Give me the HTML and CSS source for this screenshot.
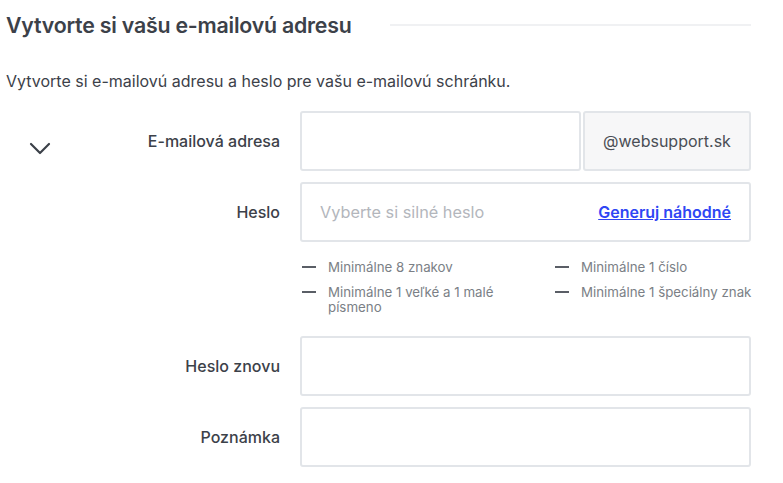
FILE: index.html
```html
<!DOCTYPE html>
<html lang="sk">
<head>
    <meta charset="UTF-8">
    <meta name="viewport" content="width=device-width, initial-scale=1.0">
    <title>Vytvorte si vašu e-mailovú adresu</title>
    <link rel="stylesheet" href="styles.css">
</head>
<body>
    <div class="page">
        <div class="section-head">
            <h2>Vytvorte si vašu e-mailovú adresu</h2>
            <div class="rule"></div>
        </div>
        <p class="intro">Vytvorte si e-mailovú adresu a heslo pre vašu e-mailovú schránku.</p>

        <form class="mail-form">
            <!-- E-mail -->
            <div class="label-cell">
                <svg class="chevron" width="22" height="13" viewBox="0 0 22 13">
                    <path d="M2 2 L11 11 L20 2" fill="none" stroke="#3c4149" stroke-width="2.2" stroke-linecap="round" stroke-linejoin="round"/>
                </svg>
                <label for="email">E-mailová adresa</label>
            </div>
            <div class="field-group">
                <input type="text" id="email" class="field">
                <span class="addon">@websupport.sk</span>
            </div>

            <!-- Heslo -->
            <div class="label-cell"><label for="pass">Heslo</label></div>
            <div class="field with-link">
                <input type="text" id="pass" placeholder="Vyberte si silné heslo">
                <a href="#" class="gen-link">Generuj náhodné</a>
            </div>

            <div></div>
            <ul class="rules">
                <li>Minimálne 8 znakov</li>
                <li>Minimálne 1 číslo</li>
                <li>Minimálne 1 veľké a 1 malé písmeno</li>
                <li>Minimálne 1 špeciálny znak</li>
            </ul>

            <!-- Heslo znovu -->
            <div class="label-cell"><label for="pass2">Heslo znovu</label></div>
            <input type="text" id="pass2" class="field">

            <!-- Poznámka -->
            <div class="label-cell"><label for="note">Poznámka</label></div>
            <input type="text" id="note" class="field">
        </form>
    </div>
</body>
</html>
```

FILE: styles.css
```css
body {
    font-family: Inter, "Noto Sans", sans-serif;
    background: #fff;
    color: #3c4149;
    margin: 0;
    padding: 0;
}
.page {
    width: 745px;
    padding-left: 6px;
}
.section-head {
    display: flex;
    align-items: center;
    height: 50px;
}
.section-head h2 {
    margin: 0;
    font-size: 21.3px;
    font-weight: 600;
    letter-spacing: -0.2px;
    color: #3c4149;
    white-space: nowrap;
}
.rule {
    flex: 1;
    height: 2px;
    background: #f0f1f3;
    margin-left: 38px;
}
.intro {
    margin: 20px 0 19px;
    font-size: 16px;
    line-height: 22px;
    color: #3c4149;
}
.mail-form {
    display: grid;
    grid-template-columns: 274px minmax(0, 1fr);
    column-gap: 20px;
    row-gap: 11px;
}
.label-cell {
    display: flex;
    align-items: center;
    justify-content: flex-end;
    position: relative;
    height: 60px;
}
.label-cell label {
    font-size: 16px;
    font-weight: 500;
    color: #3c4149;
}
.chevron {
    position: absolute;
    left: 23px;
    top: 31px;
}
.field {
    box-sizing: border-box;
    width: 100%;
    height: 60px;
    border: 2px solid #e2e5e9;
    border-radius: 3px;
    background: #fff;
    font-family: inherit;
    font-size: 16px;
    padding: 0 18px;
    outline: none;
}
.field-group {
    display: flex;
    gap: 2px;
}
.field-group .field {
    flex: 1;
    min-width: 0;
}
.addon {
    box-sizing: border-box;
    flex: 0 0 168px;
    height: 60px;
    display: flex;
    align-items: center;
    justify-content: center;
    border: 2px solid #e2e5e9;
    border-radius: 3px;
    background: #f7f7f8;
    font-size: 16px;
    color: #4a4e55;
}
.with-link {
    display: flex;
    align-items: center;
}
.with-link input {
    flex: 1;
    min-width: 0;
    border: none;
    outline: none;
    font-family: inherit;
    font-size: 16.3px;
    color: #3c4149;
    padding: 0;
}
.with-link input::placeholder {
    color: #b3b6bc;
}
.gen-link {
    font-size: 16px;
    font-weight: 600;
    color: #2f46f4;
    text-decoration: underline;
}
.rules {
    list-style: none;
    margin: 7px 0 10px;
    padding: 0;
    display: grid;
    grid-template-columns: 253px 1fr;
    row-gap: 10px;
}
.rules li {
    position: relative;
    padding-left: 28px;
    padding-right: 36px;
    font-size: 13.3px;
    line-height: 15px;
    color: #7b7f86;
}
.rules li:nth-child(2n) {
    padding-right: 0;
    white-space: nowrap;
}
.rules li::before {
    content: "";
    position: absolute;
    left: 2px;
    top: 6px;
    width: 14px;
    height: 2px;
    background: #5a5e66;
}
```
